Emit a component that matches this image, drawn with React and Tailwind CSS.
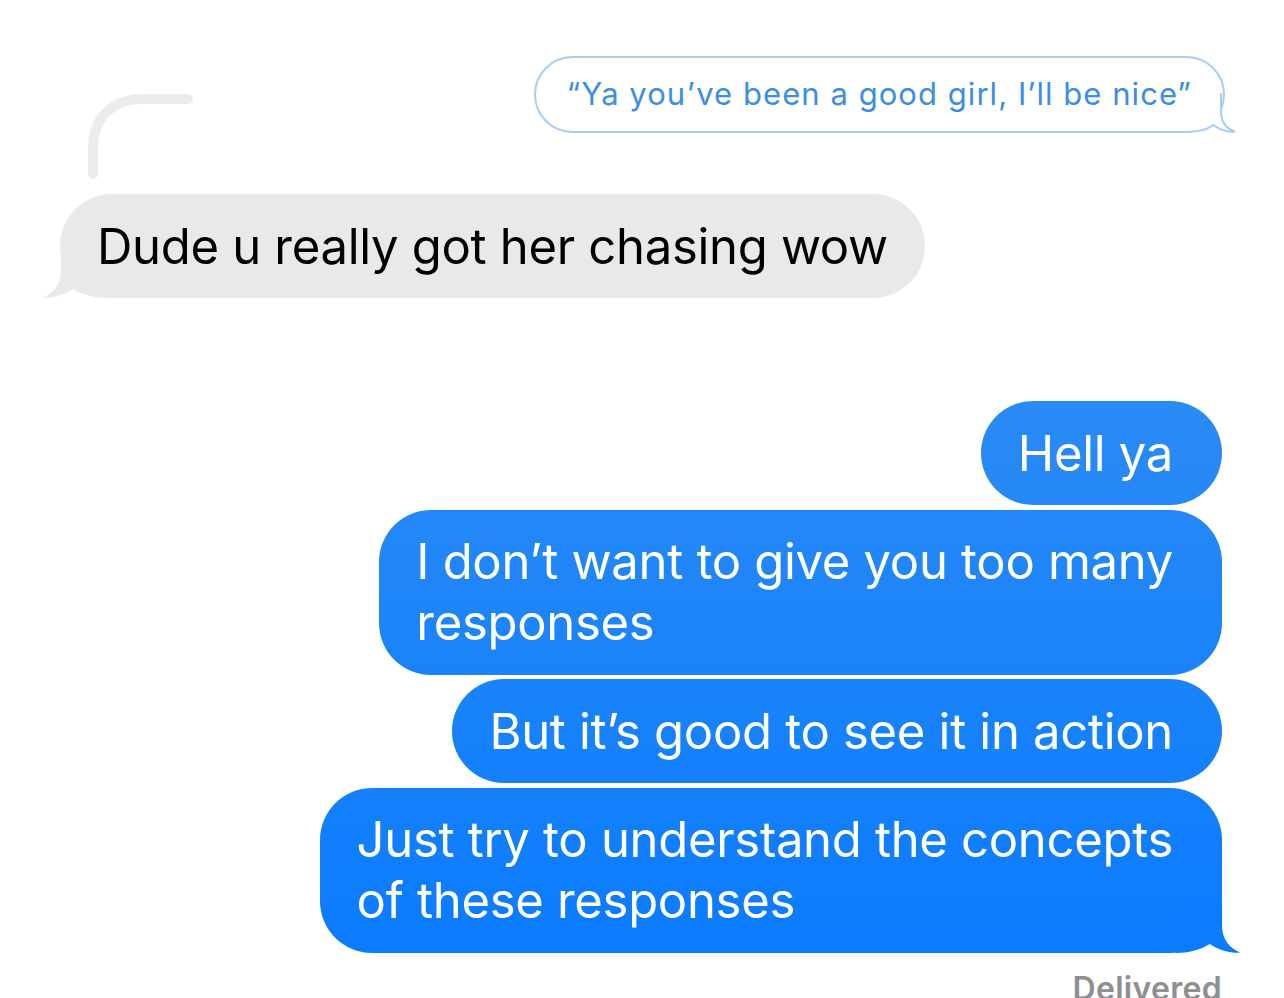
import React from 'react'

const font = { fontFamily: 'Inter, "Liberation Sans", sans-serif' }

function BlueBubble({ children, tail }) {
  return (
    <div className="relative w-fit rounded-[52px] bg-[linear-gradient(180deg,#3a95f0_0%,#2a8bf5_40%,#0a7bff_96%)] bg-fixed pl-[37px] pr-[49px] py-[21.5px] text-[49px] leading-[61px] tracking-[-0.3px] text-white">
      {tail && (
        <svg className="absolute right-[-18px] bottom-0" width="64" height="50" viewBox="0 0 64 50">
          <path d="M0 0 L46 0 L46 22 C46 36 53 45 64 49.5 C54 50.5 42 47 34 41 C24 47 12 50 0 50 Z" fill="#0b7bff" />
        </svg>
      )}
      <span className="relative">{children}</span>
    </div>
  )
}

export default function App() {
  return (
    <div className="min-h-[998px] w-[1284px] overflow-hidden bg-white" style={font}>
      <div className="flex flex-col pt-[56px]">
        <div className="flex items-start justify-between pl-[80px] pr-[59px]">
          <svg className="mt-[34px]" width="120" height="95" viewBox="0 0 120 95">
            <path d="M13 84 L13 58 C13 27 33 9 63 9 L108 9" fill="none" stroke="#ececee" strokeWidth="10" strokeLinecap="round" />
          </svg>
          <div className="relative rounded-full border-2 border-[#a7cdf4] bg-white px-[31px] h-[77px] flex items-center text-[31px] tracking-[1.05px] text-[#3b8ee8]">
            <svg className="absolute right-[-16px] bottom-[-2px]" width="62" height="40" viewBox="0 0 62 40">
              <path d="M0 2 L44 2 L44 18 C44 30 50 36 58 38.5 C50 39.5 42 36 36 32 C30 37 22 39 0 39 Z" fill="#fff" />
              <path d="M44 0 L44 18 C44 30 50 36 58 38.5 C50 39.5 42 36 36 32 C30 37 22 39 0 39" fill="none" stroke="#a7cdf4" strokeWidth="2" />
            </svg>
            <span className="relative">“Ya you’ve been a good girl, I’ll be nice”</span>
          </div>
        </div>

        <div className="mt-[9px] pl-[60px]">
          <div className="relative w-fit rounded-[52px] bg-[#e9e9eb] px-[37px] py-[21.5px] text-[49px] leading-[61px] tracking-[-0.3px] text-black">
            <svg className="absolute left-[-17px] bottom-0" width="64" height="50" viewBox="0 0 64 50">
              <path d="M64 0 L18 0 L18 22 C18 36 11 45 0 49.5 C10 50.5 22 47 30 41 C40 47 52 50 64 50 Z" fill="#e9e9eb" />
            </svg>
            <span className="relative">Dude u really got her chasing wow</span>
          </div>
        </div>

        <div className="mt-[103px] flex flex-col items-end gap-[4.5px] pr-[62px]">
          <BlueBubble>Hell ya</BlueBubble>
          <BlueBubble>
            I don’t want to give you too many
            <br />
            responses
          </BlueBubble>
          <BlueBubble>But it’s good to see it in action</BlueBubble>
          <BlueBubble tail>
            Just try to understand the concepts
            <br />
            of these responses
          </BlueBubble>
          <div className="mt-[14px] text-[32px] leading-[36px] font-semibold tracking-[0.3px] text-[#8e8e93]">Delivered</div>
        </div>
      </div>
    </div>
  )
}
